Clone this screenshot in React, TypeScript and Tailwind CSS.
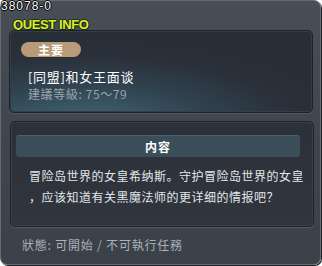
import React from 'react'

const cjk = '"Noto Sans CJK SC", "Noto Sans CJK TC", sans-serif'

export default function App() {
  return (
    <div className="relative w-[322px] h-[266px] bg-white overflow-hidden" style={{ fontFamily: cjk }}>
      {/* outer window */}
      <div className="w-[321px] h-[265px] rounded-[7px] border border-[#646b73] bg-linear-to-b from-[#474e56] via-[#40464e] to-[#3b4149] shadow-[1px_1px_0_#1e2226] flex flex-col">
        {/* header */}
        <div className="h-[29px] pl-[12px] pt-[9px]">
          <span
            className="text-[13px] font-bold leading-[14px] tracking-[-0.4px] text-[#d6f02e] [text-shadow:1px_0_0_#252a12,-1px_0_0_#252a12,0_1px_0_#252a12,0_-1px_0_#252a12,1px_1px_0_#252a12]"
            style={{ fontFamily: '"Liberation Sans", Arial, sans-serif' }}
          >
            QUEST INFO
          </span>
        </div>

        {/* quest summary */}
        <div className="ml-[8px] w-[304px] h-[83px] rounded-[5px] border border-[#1d2229] bg-[radial-gradient(ellipse_90%_110%_at_25%_115%,#416874_0%,#30434f_45%,#2a313b_75%,#282e38_100%)] shadow-[inset_0_0_0_1px_#353d48,0_1px_0_#515860] flex flex-col pl-[11px] pt-[11px]">
          <div className="w-[60px] h-[15px] rounded-full bg-[#b89c79] flex items-center justify-center text-[12px] font-bold leading-none tracking-[1px] text-white">
            主要
          </div>
          <p className="ml-[7px] mt-[11px] text-[13px] leading-[17px] tracking-[0.7px] text-white">[同盟]和女王面谈</p>
          <p className="ml-[7px] mt-[2px] text-[12px] leading-[14px] tracking-[0.6px] text-[#9ba3ab]">建議等級: 75～79</p>
        </div>

        {/* content */}
        <div className="ml-[9px] mt-[8px] w-[304px] h-[106px] rounded-[5px] border border-[#1d2229] bg-linear-to-b from-[#2b3039] to-[#31363e] shadow-[inset_0_0_0_1px_#3a414b,0_1px_0_#515860] flex flex-col">
          <div className="ml-[5px] mr-[13px] mt-[13px] h-[22px] rounded-[3px] bg-[#3a4e5a] border-t border-[#4a616d] flex items-center justify-center text-[12px] font-bold tracking-[1px] text-white">
            内容
          </div>
          <p className="ml-[18px] mt-[8px] text-[12px] leading-[21px] tracking-[0.5px] text-[#e2e6ea] whitespace-nowrap">
            冒险岛世界的女皇希纳斯。守护冒险岛世界的女皇
            <br />
            ，应该知道有关黑魔法师的更详细的情报吧？
          </p>
        </div>

        {/* status */}
        <p className="ml-[21px] mt-[11px] text-[12px] leading-[14px] tracking-[0.8px] text-[#aab1b8]">狀態: 可開始 / 不可執行任務</p>
      </div>

      {/* id tag over the corner */}
      <span
        className="absolute left-[1px] top-0 text-[12px] leading-[12px] tracking-[1px] text-white [text-shadow:1px_0_0_#000,-1px_0_0_#000,0_1px_0_#000,0_-1px_0_#000]"
        style={{ fontFamily: '"Liberation Sans", Arial, sans-serif' }}
      >
        38078-0
      </span>
    </div>
  )
}
